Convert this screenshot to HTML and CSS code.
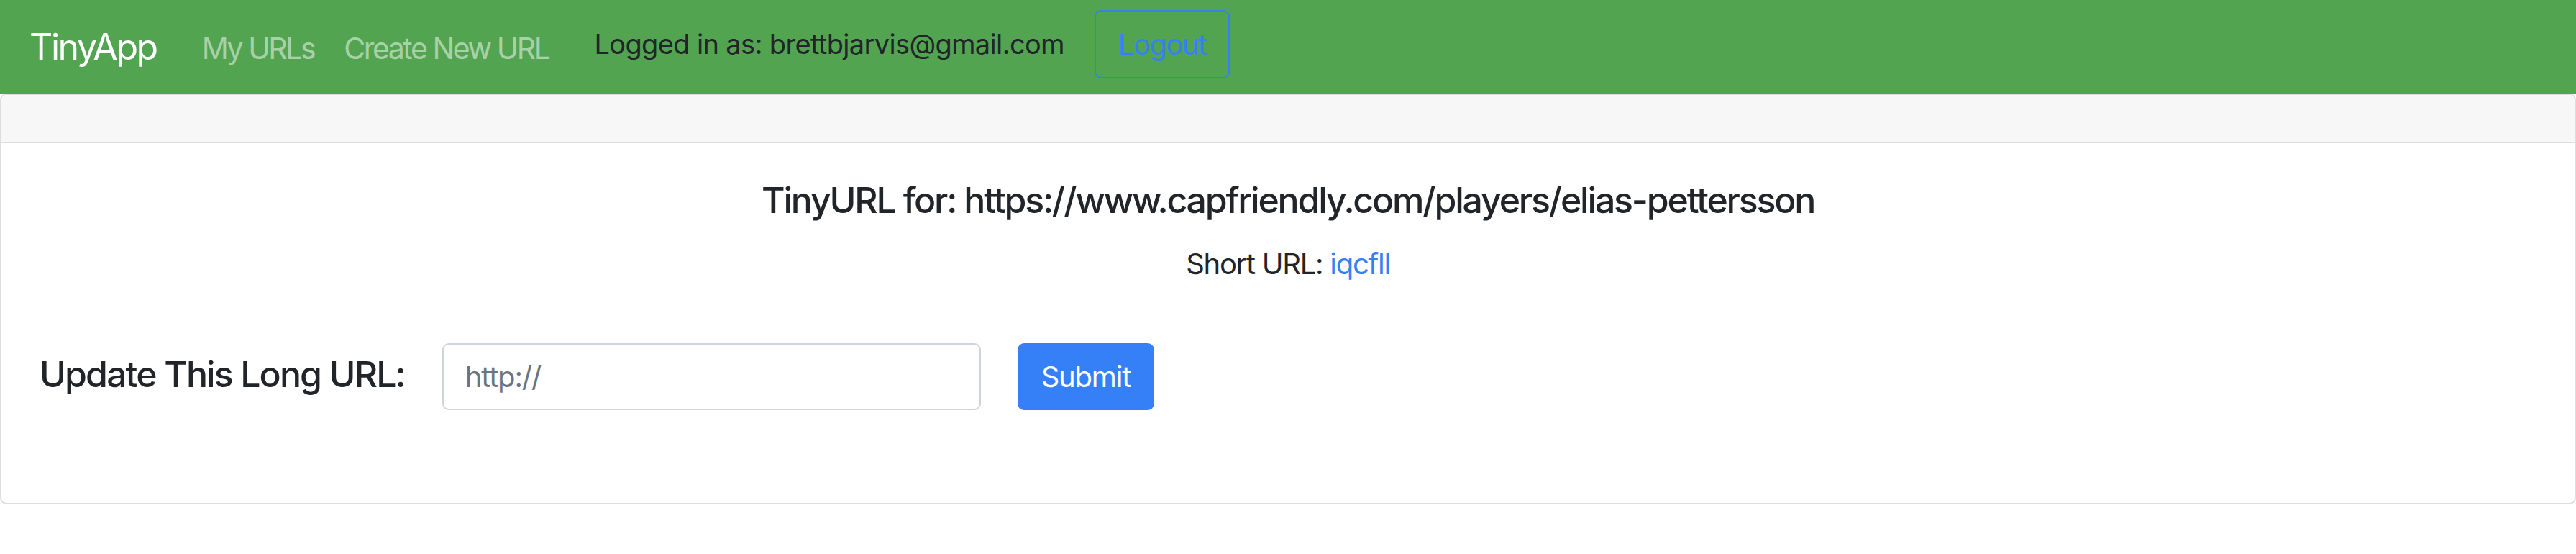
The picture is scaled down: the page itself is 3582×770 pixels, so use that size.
FILE: index.html
```html
<!DOCTYPE html>
<html lang="en">
<head>
<meta charset="utf-8">
<title>TinyApp</title>
<link rel="stylesheet" href="styles.css">
</head>
<body>
<nav class="navbar">
  <a class="brand" href="#">TinyApp</a>
  <a class="nav-link" href="#">My URLs</a>
  <a class="nav-link last" href="#">Create New URL</a>
  <div class="user">
    <span class="logged">Logged in as: brettbjarvis@gmail.com</span>
    <button class="btn-logout" type="button">Logout</button>
  </div>
</nav>
<div class="card">
  <div class="card-header"></div>
  <div class="card-body">
    <h5 class="title">TinyURL for: https://www.capfriendly.com/players/elias-pettersson</h5>
    <p class="short">Short URL: <a href="#">iqcfll</a></p>
    <form class="form-row">
      <label class="label" for="longURL">Update This Long URL:</label>
      <input class="input" id="longURL" type="text" placeholder="http://">
      <button class="btn-submit" type="button">Submit</button>
    </form>
  </div>
</div>
</body>
</html>
```

FILE: styles.css
```css
* { box-sizing: border-box; }
body {
  margin: 0;
  font-family: Inter, "Liberation Sans", sans-serif;
  letter-spacing: -0.04em;
  color: #212529;
  background: #ffffff;
}
a { text-decoration: none; }

.navbar {
  display: flex;
  align-items: center;
  height: 130px;
  padding: 0 41px;
  background: #52a451;
}
.brand {
  font-size: 50px;
  line-height: 1.2;
  letter-spacing: -0.048em;
  color: #ffffff;
  margin-right: 63px;
}
.nav-link {
  font-size: 41px;
  line-height: 1.2;
  letter-spacing: -0.06em;
  color: rgba(255, 255, 255, 0.5);
  margin-right: 41px;
  margin-top: 6px;
}
.nav-link.last { margin-right: 63px; }
.user {
  display: flex;
  align-items: center;
  margin-bottom: 7px;
}
.logged {
  font-size: 38px;
  line-height: 1.2;
  color: #212529;
  margin-right: 42px;
}
.btn-logout {
  display: inline-flex;
  align-items: center;
  height: 95px;
  padding: 0 31px;
  font-family: inherit;
  font-size: 40px;
  line-height: 1.2;
  letter-spacing: -0.04em;
  color: #3580f6;
  background: transparent;
  border: 2px solid #3580f6;
  border-radius: 9px;
}

.card {
  border: 2px solid #dddddd;
  border-radius: 9px;
  height: 571px;
}
.card-header {
  height: 67px;
  background: #f7f7f7;
  border-bottom: 2px solid #dddddd;
  border-radius: 7px 7px 0 0;
}
.card-body {
  padding: 49px 53px 0;
}
.title {
  margin: 0;
  text-align: center;
  font-size: 50px;
  line-height: 1.2;
  font-weight: 500;
  letter-spacing: -0.044em;
}
.short {
  margin: 35px 0 0;
  text-align: center;
  font-size: 40px;
  line-height: 1.2;
  letter-spacing: -0.032em;
}
.short a { color: #3580f6; }

.form-row {
  display: flex;
  align-items: center;
  margin-top: 86px;
}
.label {
  font-size: 50px;
  line-height: 1.2;
  font-weight: 500;
  letter-spacing: -0.038em;
  margin-right: 52px;
  margin-bottom: 8px;
}
.input {
  width: 749px;
  height: 93px;
  padding: 0 30px;
  font-family: inherit;
  font-size: 40px;
  letter-spacing: -0.03em;
  color: #495057;
  border: 2px solid #ced4da;
  border-radius: 9px;
  margin-right: 51px;
}
.input::placeholder { color: #6c757d; }
.btn-submit {
  width: 190px;
  height: 93px;
  font-family: inherit;
  font-size: 40px;
  letter-spacing: -0.03em;
  color: #ffffff;
  background: #3580f6;
  border: none;
  border-radius: 9px;
}
```
